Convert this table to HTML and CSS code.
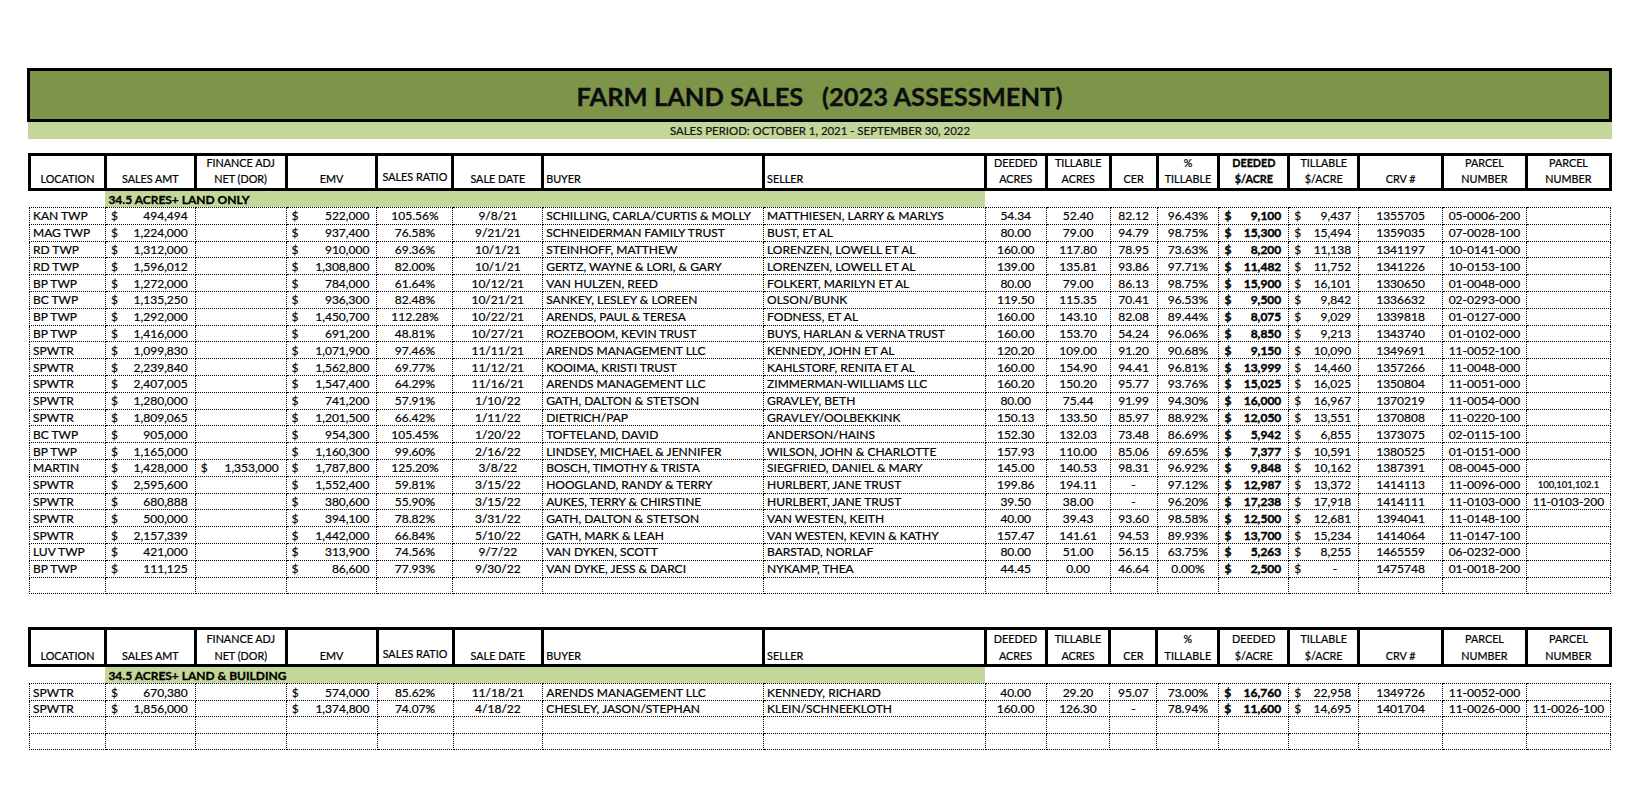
FILE: index.html
```html
<!DOCTYPE html>
<html lang="en">
<head>
<meta charset="utf-8">
<title>Farm Land Sales (2023 Assessment)</title>
<link rel="stylesheet" href="styles.css">
</head>
<body>
<div class="page">
  <div class="title">FARM LAND SALES   (2023 ASSESSMENT)</div>
  <div class="period">SALES PERIOD: OCTOBER 1, 2021 - SEPTEMBER 30, 2022</div>

  <table class="sheet top">
    <colgroup>
      <col class="w-loc"><col class="w-amt"><col class="w-fin"><col class="w-emv"><col class="w-ratio"><col class="w-date"><col class="w-buyer"><col class="w-seller"><col class="w-dac"><col class="w-tac"><col class="w-cer"><col class="w-pct"><col class="w-dpa"><col class="w-tpa"><col class="w-crv"><col class="w-par"><col class="w-par2">
    </colgroup>
    <thead>
      <tr class="hd">
        <th><div class="h">LOCATION</div></th>
        <th><div class="h">SALES AMT</div></th>
        <th><div class="h">FINANCE ADJ<br>NET (DOR)</div></th>
        <th><div class="h">EMV</div></th>
        <th><div class="h raised">SALES RATIO</div></th>
        <th><div class="h">SALE DATE</div></th>
        <th class="hl"><div class="h">BUYER</div></th>
        <th class="hl"><div class="h">SELLER</div></th>
        <th><div class="h">DEEDED<br>ACRES</div></th>
        <th><div class="h">TILLABLE<br>ACRES</div></th>
        <th><div class="h">CER</div></th>
        <th><div class="h">%<br>TILLABLE</div></th>
        <th class="hb"><div class="h">DEEDED<br>$/ACRE</div></th>
        <th><div class="h">TILLABLE<br>$/ACRE</div></th>
        <th><div class="h">CRV #</div></th>
        <th><div class="h">PARCEL<br>NUMBER</div></th>
        <th><div class="h">PARCEL<br>NUMBER</div></th>
      </tr>
    </thead>
    <tbody>
      <tr class="sec"><td></td><td colspan="7" class="band">34.5 ACRES+ LAND ONLY</td><td colspan="9"></td></tr>
      <tr class="dr"><td>KAN TWP</td><td class="a"><span>$</span>494,494</td><td></td><td class="a"><span>$</span>522,000</td><td class="c">105.56%</td><td class="c">9/8/21</td><td>SCHILLING, CARLA/CURTIS &amp; MOLLY</td><td>MATTHIESEN, LARRY &amp; MARLYS</td><td class="c">54.34</td><td class="c">52.40</td><td class="c">82.12</td><td class="c">96.43%</td><td class="a b"><span>$</span>9,100</td><td class="a"><span>$</span>9,437</td><td class="c">1355705</td><td class="c">05-0006-200</td><td></td></tr>
      <tr class="dr"><td>MAG TWP</td><td class="a"><span>$</span>1,224,000</td><td></td><td class="a"><span>$</span>937,400</td><td class="c">76.58%</td><td class="c">9/21/21</td><td>SCHNEIDERMAN FAMILY TRUST</td><td>BUST, ET AL</td><td class="c">80.00</td><td class="c">79.00</td><td class="c">94.79</td><td class="c">98.75%</td><td class="a b"><span>$</span>15,300</td><td class="a"><span>$</span>15,494</td><td class="c">1359035</td><td class="c">07-0028-100</td><td></td></tr>
      <tr class="dr"><td>RD TWP</td><td class="a"><span>$</span>1,312,000</td><td></td><td class="a"><span>$</span>910,000</td><td class="c">69.36%</td><td class="c">10/1/21</td><td>STEINHOFF, MATTHEW</td><td>LORENZEN, LOWELL ET AL</td><td class="c">160.00</td><td class="c">117.80</td><td class="c">78.95</td><td class="c">73.63%</td><td class="a b"><span>$</span>8,200</td><td class="a"><span>$</span>11,138</td><td class="c">1341197</td><td class="c">10-0141-000</td><td></td></tr>
      <tr class="dr"><td>RD TWP</td><td class="a"><span>$</span>1,596,012</td><td></td><td class="a"><span>$</span>1,308,800</td><td class="c">82.00%</td><td class="c">10/1/21</td><td>GERTZ, WAYNE &amp; LORI, &amp; GARY</td><td>LORENZEN, LOWELL ET AL</td><td class="c">139.00</td><td class="c">135.81</td><td class="c">93.86</td><td class="c">97.71%</td><td class="a b"><span>$</span>11,482</td><td class="a"><span>$</span>11,752</td><td class="c">1341226</td><td class="c">10-0153-100</td><td></td></tr>
      <tr class="dr"><td>BP TWP</td><td class="a"><span>$</span>1,272,000</td><td></td><td class="a"><span>$</span>784,000</td><td class="c">61.64%</td><td class="c">10/12/21</td><td>VAN HULZEN, REED</td><td>FOLKERT, MARILYN ET AL</td><td class="c">80.00</td><td class="c">79.00</td><td class="c">86.13</td><td class="c">98.75%</td><td class="a b"><span>$</span>15,900</td><td class="a"><span>$</span>16,101</td><td class="c">1330650</td><td class="c">01-0048-000</td><td></td></tr>
      <tr class="dr"><td>BC TWP</td><td class="a"><span>$</span>1,135,250</td><td></td><td class="a"><span>$</span>936,300</td><td class="c">82.48%</td><td class="c">10/21/21</td><td>SANKEY, LESLEY &amp; LOREEN</td><td>OLSON/BUNK</td><td class="c">119.50</td><td class="c">115.35</td><td class="c">70.41</td><td class="c">96.53%</td><td class="a b"><span>$</span>9,500</td><td class="a"><span>$</span>9,842</td><td class="c">1336632</td><td class="c">02-0293-000</td><td></td></tr>
      <tr class="dr"><td>BP TWP</td><td class="a"><span>$</span>1,292,000</td><td></td><td class="a"><span>$</span>1,450,700</td><td class="c">112.28%</td><td class="c">10/22/21</td><td>ARENDS, PAUL &amp; TERESA</td><td>FODNESS, ET AL</td><td class="c">160.00</td><td class="c">143.10</td><td class="c">82.08</td><td class="c">89.44%</td><td class="a b"><span>$</span>8,075</td><td class="a"><span>$</span>9,029</td><td class="c">1339818</td><td class="c">01-0127-000</td><td></td></tr>
      <tr class="dr"><td>BP TWP</td><td class="a"><span>$</span>1,416,000</td><td></td><td class="a"><span>$</span>691,200</td><td class="c">48.81%</td><td class="c">10/27/21</td><td>ROZEBOOM, KEVIN TRUST</td><td>BUYS, HARLAN &amp; VERNA TRUST</td><td class="c">160.00</td><td class="c">153.70</td><td class="c">54.24</td><td class="c">96.06%</td><td class="a b"><span>$</span>8,850</td><td class="a"><span>$</span>9,213</td><td class="c">1343740</td><td class="c">01-0102-000</td><td></td></tr>
      <tr class="dr"><td>SPWTR</td><td class="a"><span>$</span>1,099,830</td><td></td><td class="a"><span>$</span>1,071,900</td><td class="c">97.46%</td><td class="c">11/11/21</td><td>ARENDS MANAGEMENT LLC</td><td>KENNEDY, JOHN ET AL</td><td class="c">120.20</td><td class="c">109.00</td><td class="c">91.20</td><td class="c">90.68%</td><td class="a b"><span>$</span>9,150</td><td class="a"><span>$</span>10,090</td><td class="c">1349691</td><td class="c">11-0052-100</td><td></td></tr>
      <tr class="dr"><td>SPWTR</td><td class="a"><span>$</span>2,239,840</td><td></td><td class="a"><span>$</span>1,562,800</td><td class="c">69.77%</td><td class="c">11/12/21</td><td>KOOIMA, KRISTI TRUST</td><td>KAHLSTORF, RENITA ET AL</td><td class="c">160.00</td><td class="c">154.90</td><td class="c">94.41</td><td class="c">96.81%</td><td class="a b"><span>$</span>13,999</td><td class="a"><span>$</span>14,460</td><td class="c">1357266</td><td class="c">11-0048-000</td><td></td></tr>
      <tr class="dr"><td>SPWTR</td><td class="a"><span>$</span>2,407,005</td><td></td><td class="a"><span>$</span>1,547,400</td><td class="c">64.29%</td><td class="c">11/16/21</td><td>ARENDS MANAGEMENT LLC</td><td>ZIMMERMAN-WILLIAMS LLC</td><td class="c">160.20</td><td class="c">150.20</td><td class="c">95.77</td><td class="c">93.76%</td><td class="a b"><span>$</span>15,025</td><td class="a"><span>$</span>16,025</td><td class="c">1350804</td><td class="c">11-0051-000</td><td></td></tr>
      <tr class="dr"><td>SPWTR</td><td class="a"><span>$</span>1,280,000</td><td></td><td class="a"><span>$</span>741,200</td><td class="c">57.91%</td><td class="c">1/10/22</td><td>GATH, DALTON &amp; STETSON</td><td>GRAVLEY, BETH</td><td class="c">80.00</td><td class="c">75.44</td><td class="c">91.99</td><td class="c">94.30%</td><td class="a b"><span>$</span>16,000</td><td class="a"><span>$</span>16,967</td><td class="c">1370219</td><td class="c">11-0054-000</td><td></td></tr>
      <tr class="dr"><td>SPWTR</td><td class="a"><span>$</span>1,809,065</td><td></td><td class="a"><span>$</span>1,201,500</td><td class="c">66.42%</td><td class="c">1/11/22</td><td>DIETRICH/PAP</td><td>GRAVLEY/OOLBEKKINK</td><td class="c">150.13</td><td class="c">133.50</td><td class="c">85.97</td><td class="c">88.92%</td><td class="a b"><span>$</span>12,050</td><td class="a"><span>$</span>13,551</td><td class="c">1370808</td><td class="c">11-0220-100</td><td></td></tr>
      <tr class="dr"><td>BC TWP</td><td class="a"><span>$</span>905,000</td><td></td><td class="a"><span>$</span>954,300</td><td class="c">105.45%</td><td class="c">1/20/22</td><td>TOFTELAND, DAVID</td><td>ANDERSON/HAINS</td><td class="c">152.30</td><td class="c">132.03</td><td class="c">73.48</td><td class="c">86.69%</td><td class="a b"><span>$</span>5,942</td><td class="a"><span>$</span>6,855</td><td class="c">1373075</td><td class="c">02-0115-100</td><td></td></tr>
      <tr class="dr"><td>BP TWP</td><td class="a"><span>$</span>1,165,000</td><td></td><td class="a"><span>$</span>1,160,300</td><td class="c">99.60%</td><td class="c">2/16/22</td><td>LINDSEY, MICHAEL &amp; JENNIFER</td><td>WILSON, JOHN &amp; CHARLOTTE</td><td class="c">157.93</td><td class="c">110.00</td><td class="c">85.06</td><td class="c">69.65%</td><td class="a b"><span>$</span>7,377</td><td class="a"><span>$</span>10,591</td><td class="c">1380525</td><td class="c">01-0151-000</td><td></td></tr>
      <tr class="dr"><td>MARTIN</td><td class="a"><span>$</span>1,428,000</td><td class="a"><span>$</span>1,353,000</td><td class="a"><span>$</span>1,787,800</td><td class="c">125.20%</td><td class="c">3/8/22</td><td>BOSCH, TIMOTHY &amp; TRISTA</td><td>SIEGFRIED, DANIEL &amp; MARY</td><td class="c">145.00</td><td class="c">140.53</td><td class="c">98.31</td><td class="c">96.92%</td><td class="a b"><span>$</span>9,848</td><td class="a"><span>$</span>10,162</td><td class="c">1387391</td><td class="c">08-0045-000</td><td></td></tr>
      <tr class="dr"><td>SPWTR</td><td class="a"><span>$</span>2,595,600</td><td></td><td class="a"><span>$</span>1,552,400</td><td class="c">59.81%</td><td class="c">3/15/22</td><td>HOOGLAND, RANDY &amp; TERRY</td><td>HURLBERT, JANE TRUST</td><td class="c">199.86</td><td class="c">194.11</td><td class="c">-</td><td class="c">97.12%</td><td class="a b"><span>$</span>12,987</td><td class="a"><span>$</span>13,372</td><td class="c">1414113</td><td class="c">11-0096-000</td><td class="c small">100,101,102.1</td></tr>
      <tr class="dr"><td>SPWTR</td><td class="a"><span>$</span>680,888</td><td></td><td class="a"><span>$</span>380,600</td><td class="c">55.90%</td><td class="c">3/15/22</td><td>AUKES, TERRY &amp; CHIRSTINE</td><td>HURLBERT, JANE TRUST</td><td class="c">39.50</td><td class="c">38.00</td><td class="c">-</td><td class="c">96.20%</td><td class="a b"><span>$</span>17,238</td><td class="a"><span>$</span>17,918</td><td class="c">1414111</td><td class="c">11-0103-000</td><td class="c">11-0103-200</td></tr>
      <tr class="dr"><td>SPWTR</td><td class="a"><span>$</span>500,000</td><td></td><td class="a"><span>$</span>394,100</td><td class="c">78.82%</td><td class="c">3/31/22</td><td>GATH, DALTON &amp; STETSON</td><td>VAN WESTEN, KEITH</td><td class="c">40.00</td><td class="c">39.43</td><td class="c">93.60</td><td class="c">98.58%</td><td class="a b"><span>$</span>12,500</td><td class="a"><span>$</span>12,681</td><td class="c">1394041</td><td class="c">11-0148-100</td><td></td></tr>
      <tr class="dr"><td>SPWTR</td><td class="a"><span>$</span>2,157,339</td><td></td><td class="a"><span>$</span>1,442,000</td><td class="c">66.84%</td><td class="c">5/10/22</td><td>GATH, MARK &amp; LEAH</td><td>VAN WESTEN, KEVIN &amp; KATHY</td><td class="c">157.47</td><td class="c">141.61</td><td class="c">94.53</td><td class="c">89.93%</td><td class="a b"><span>$</span>13,700</td><td class="a"><span>$</span>15,234</td><td class="c">1414064</td><td class="c">11-0147-100</td><td></td></tr>
      <tr class="dr"><td>LUV TWP</td><td class="a"><span>$</span>421,000</td><td></td><td class="a"><span>$</span>313,900</td><td class="c">74.56%</td><td class="c">9/7/22</td><td>VAN DYKEN, SCOTT</td><td>BARSTAD, NORLAF</td><td class="c">80.00</td><td class="c">51.00</td><td class="c">56.15</td><td class="c">63.75%</td><td class="a b"><span>$</span>5,263</td><td class="a"><span>$</span>8,255</td><td class="c">1465559</td><td class="c">06-0232-000</td><td></td></tr>
      <tr class="dr"><td>BP TWP</td><td class="a"><span>$</span>111,125</td><td></td><td class="a"><span>$</span>86,600</td><td class="c">77.93%</td><td class="c">9/30/22</td><td>VAN DYKE, JESS &amp; DARCI</td><td>NYKAMP, THEA</td><td class="c">44.45</td><td class="c">0.00</td><td class="c">46.64</td><td class="c">0.00%</td><td class="a b"><span>$</span>2,500</td><td class="a"><span>$</span><em class="dash">-</em></td><td class="c">1475748</td><td class="c">01-0018-200</td><td></td></tr>
      <tr class="dr"><td></td><td></td><td></td><td></td><td></td><td></td><td></td><td></td><td></td><td></td><td></td><td></td><td></td><td></td><td></td><td></td><td></td></tr>
    </tbody>
  </table>

  <table class="sheet bottom">
    <colgroup>
      <col class="w-loc"><col class="w-amt"><col class="w-fin"><col class="w-emv"><col class="w-ratio"><col class="w-date"><col class="w-buyer"><col class="w-seller"><col class="w-dac"><col class="w-tac"><col class="w-cer"><col class="w-pct"><col class="w-dpa"><col class="w-tpa"><col class="w-crv"><col class="w-par"><col class="w-par2">
    </colgroup>
    <thead>
      <tr class="hd">
        <th><div class="h">LOCATION</div></th>
        <th><div class="h">SALES AMT</div></th>
        <th><div class="h">FINANCE ADJ<br>NET (DOR)</div></th>
        <th><div class="h">EMV</div></th>
        <th><div class="h raised">SALES RATIO</div></th>
        <th><div class="h">SALE DATE</div></th>
        <th class="hl"><div class="h">BUYER</div></th>
        <th class="hl"><div class="h">SELLER</div></th>
        <th><div class="h">DEEDED<br>ACRES</div></th>
        <th><div class="h">TILLABLE<br>ACRES</div></th>
        <th><div class="h">CER</div></th>
        <th><div class="h">%<br>TILLABLE</div></th>
        <th><div class="h">DEEDED<br>$/ACRE</div></th>
        <th><div class="h">TILLABLE<br>$/ACRE</div></th>
        <th><div class="h">CRV #</div></th>
        <th><div class="h">PARCEL<br>NUMBER</div></th>
        <th><div class="h">PARCEL<br>NUMBER</div></th>
      </tr>
    </thead>
    <tbody>
      <tr class="sec"><td></td><td colspan="7" class="band">34.5 ACRES+ LAND &amp; BUILDING</td><td colspan="9"></td></tr>
      <tr class="dr"><td>SPWTR</td><td class="a"><span>$</span>670,380</td><td></td><td class="a"><span>$</span>574,000</td><td class="c">85.62%</td><td class="c">11/18/21</td><td>ARENDS MANAGEMENT LLC</td><td>KENNEDY, RICHARD</td><td class="c">40.00</td><td class="c">29.20</td><td class="c">95.07</td><td class="c">73.00%</td><td class="a b"><span>$</span>16,760</td><td class="a"><span>$</span>22,958</td><td class="c">1349726</td><td class="c">11-0052-000</td><td></td></tr>
      <tr class="dr"><td>SPWTR</td><td class="a"><span>$</span>1,856,000</td><td></td><td class="a"><span>$</span>1,374,800</td><td class="c">74.07%</td><td class="c">4/18/22</td><td>CHESLEY, JASON/STEPHAN</td><td>KLEIN/SCHNEEKLOTH</td><td class="c">160.00</td><td class="c">126.30</td><td class="c">-</td><td class="c">78.94%</td><td class="a b"><span>$</span>11,600</td><td class="a"><span>$</span>14,695</td><td class="c">1401704</td><td class="c">11-0026-000</td><td class="c">11-0026-100</td></tr>
      <tr class="dr"><td></td><td></td><td></td><td></td><td></td><td></td><td></td><td></td><td></td><td></td><td></td><td></td><td></td><td></td><td></td><td></td><td></td></tr>
      <tr class="dr"><td></td><td></td><td></td><td></td><td></td><td></td><td></td><td></td><td></td><td></td><td></td><td></td><td></td><td></td><td></td><td></td><td></td></tr>
    </tbody>
  </table>
</div>
</body>
</html>
```

FILE: styles.css
```css
html, body {
  margin: 0;
  padding: 0;
  background: #ffffff;
}

body {
  font-family: Lato, "Open Sans", "Liberation Sans", sans-serif;
  color: #000;
}

.page {
  width: 1585px;
  padding: 68px 0 0 27px;
}

.title {
  height: 46px;
  padding-top: 2px;
  border: 3px solid #000;
  background: #7d9449;
  display: flex;
  align-items: center;
  justify-content: center;
  font-size: 25.5px;
  font-weight: 700;
  white-space: pre;
  color: #0d0d0d;
  -webkit-text-stroke: 0.3px #0d0d0d;
}

.period {
  height: 17px;
  margin-left: 1px;
  background: #c4d79b;
  text-align: center;
  font-size: 11.4px;
  line-height: 17px;
  color: #111;
  -webkit-text-stroke: 0.2px #111;
}

.sheet {
  border-collapse: collapse;
  table-layout: fixed;
  margin-left: 1px;
}

.sheet.top { margin-top: 14px; }
.sheet.bottom { margin-top: 33px; }

.w-loc { width: 76px; }
.w-amt { width: 90px; }
.w-fin { width: 91px; }
.w-emv { width: 91px; }
.w-ratio { width: 76px; }
.w-date { width: 90px; }
.w-buyer { width: 221px; }
.w-seller { width: 222px; }
.w-dac { width: 61px; }
.w-tac { width: 64px; }
.w-cer { width: 47px; }
.w-pct { width: 62px; }
.w-dpa { width: 70px; }
.w-tpa { width: 70px; }
.w-crv { width: 84px; }
.w-par { width: 84px; }
.w-par2 { width: 84px; }

.sheet th {
  border: 3px solid #000;
  padding: 0;
  font-weight: 400;
  font-size: 10.8px;
  text-align: center;
  vertical-align: bottom;
  -webkit-text-stroke: 0.2px #000;
}

.sheet th.hl { text-align: left; }
.sheet th.hb { font-weight: 700; -webkit-text-stroke: 0.3px #000; }

.sheet .h {
  height: 30px;
  display: flex;
  flex-direction: column;
  justify-content: flex-end;
  line-height: 16.7px;
  padding: 0 2px 0;
  white-space: nowrap;
}

.sheet.bottom .h { height: 32px; }

.sheet .h.raised { padding-bottom: 2px; }

.sheet td {
  padding: 0 3px;
  font-size: 12px;
  line-height: 15px;
  white-space: nowrap;
  overflow: hidden;
  vertical-align: middle;
  text-align: left;
  -webkit-text-stroke: 0.2px #000;
}

.sheet tr.sec td {
  height: 16px;
  padding: 0;
}

.sheet tr.sec td.band {
  background: #c4d79b;
  font-weight: 700;
  padding-left: 3px;
  -webkit-text-stroke: 0.3px #000;
}

.sheet tr.dr td {
  height: 15.8px;
  border: 1px dotted #000;
}

.sheet.bottom tr.dr td { height: 15.5px; }

.sheet td.c { text-align: center; }

.sheet td.a {
  text-align: right;
  padding: 0 7px 0 5px;
}

.sheet td.a span { float: left; }
.sheet td.b { font-weight: 700; -webkit-text-stroke: 0.4px #000; }

.sheet td .dash {
  font-style: normal;
  padding-right: 14px;
}

.sheet td.small {
  font-size: 9.5px;
  padding: 0 1px;
}
```
